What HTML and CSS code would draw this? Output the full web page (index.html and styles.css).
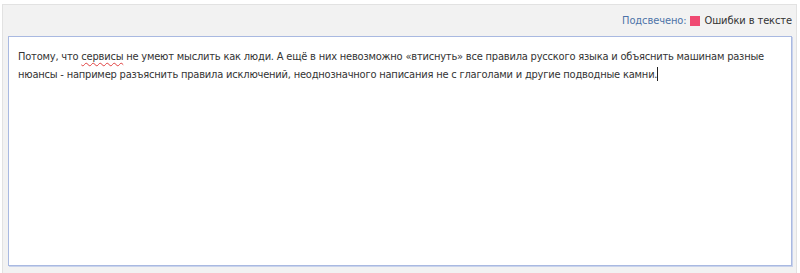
FILE: index.html
```html
<!DOCTYPE html>
<html lang="ru">
<head>
    <meta charset="UTF-8">
    <title>Проверка текста</title>
    <link rel="stylesheet" href="styles.css">
</head>
<body>
    <div class="checker">
        <div class="legend">
            <span class="legend-label">Подсвечено:</span>
            <span class="legend-swatch"></span>
            <span class="legend-text">Ошибки в тексте</span>
        </div>
        <div class="editor">
            <p class="line">Потому, что <span class="error">сервисы</span> не умеют мыслить как люди. А ещё в них невозможно «втиснуть» все правила русского языка и объяснить машинам разные</p>
            <p class="line">нюансы - например разъяснить правила исключений, неоднозначного написания не с глаголами и другие подводные камни.<span class="caret"></span></p>
        </div>
    </div>
</body>
</html>
```

FILE: styles.css
```css
body {
    margin: 0;
    background-color: #ffffff;
    font-family: 'DejaVu Sans Condensed', 'DejaVu Sans', sans-serif;
    color: #333;
}

.checker {
    margin: 4px 3px 0 2px;
    height: 280px;
    background-color: #f2f2f2;
    border: 1px solid #e2e2e2;
    padding: 0 4px 0 5px;
    box-sizing: border-box;
}

.legend {
    display: flex;
    justify-content: flex-end;
    align-items: center;
    gap: 4px;
    height: 31px;
    font-size: 11px;
    letter-spacing: -0.1px;
}

.legend-label {
    color: #4d72a8;
}

.legend-swatch {
    width: 10px;
    height: 10px;
    background-color: #f04a72;
}

.editor {
    height: 230px;
    background-color: #fff;
    border: 1px solid #a9b9e1;
    box-shadow: 1px 1px 0 #c9d3ec;
    padding: 11px 9px;
    box-sizing: border-box;
    font-size: 11px;
    letter-spacing: -0.2px;
}

.line {
    margin: 0;
    line-height: 18px;
    white-space: nowrap;
}

.error {
    text-decoration: underline wavy #e04040;
    text-decoration-thickness: 1px;
    text-underline-offset: 2px;
}

.caret {
    display: inline-block;
    width: 1px;
    height: 14px;
    background-color: #222;
    vertical-align: -3px;
}
```
